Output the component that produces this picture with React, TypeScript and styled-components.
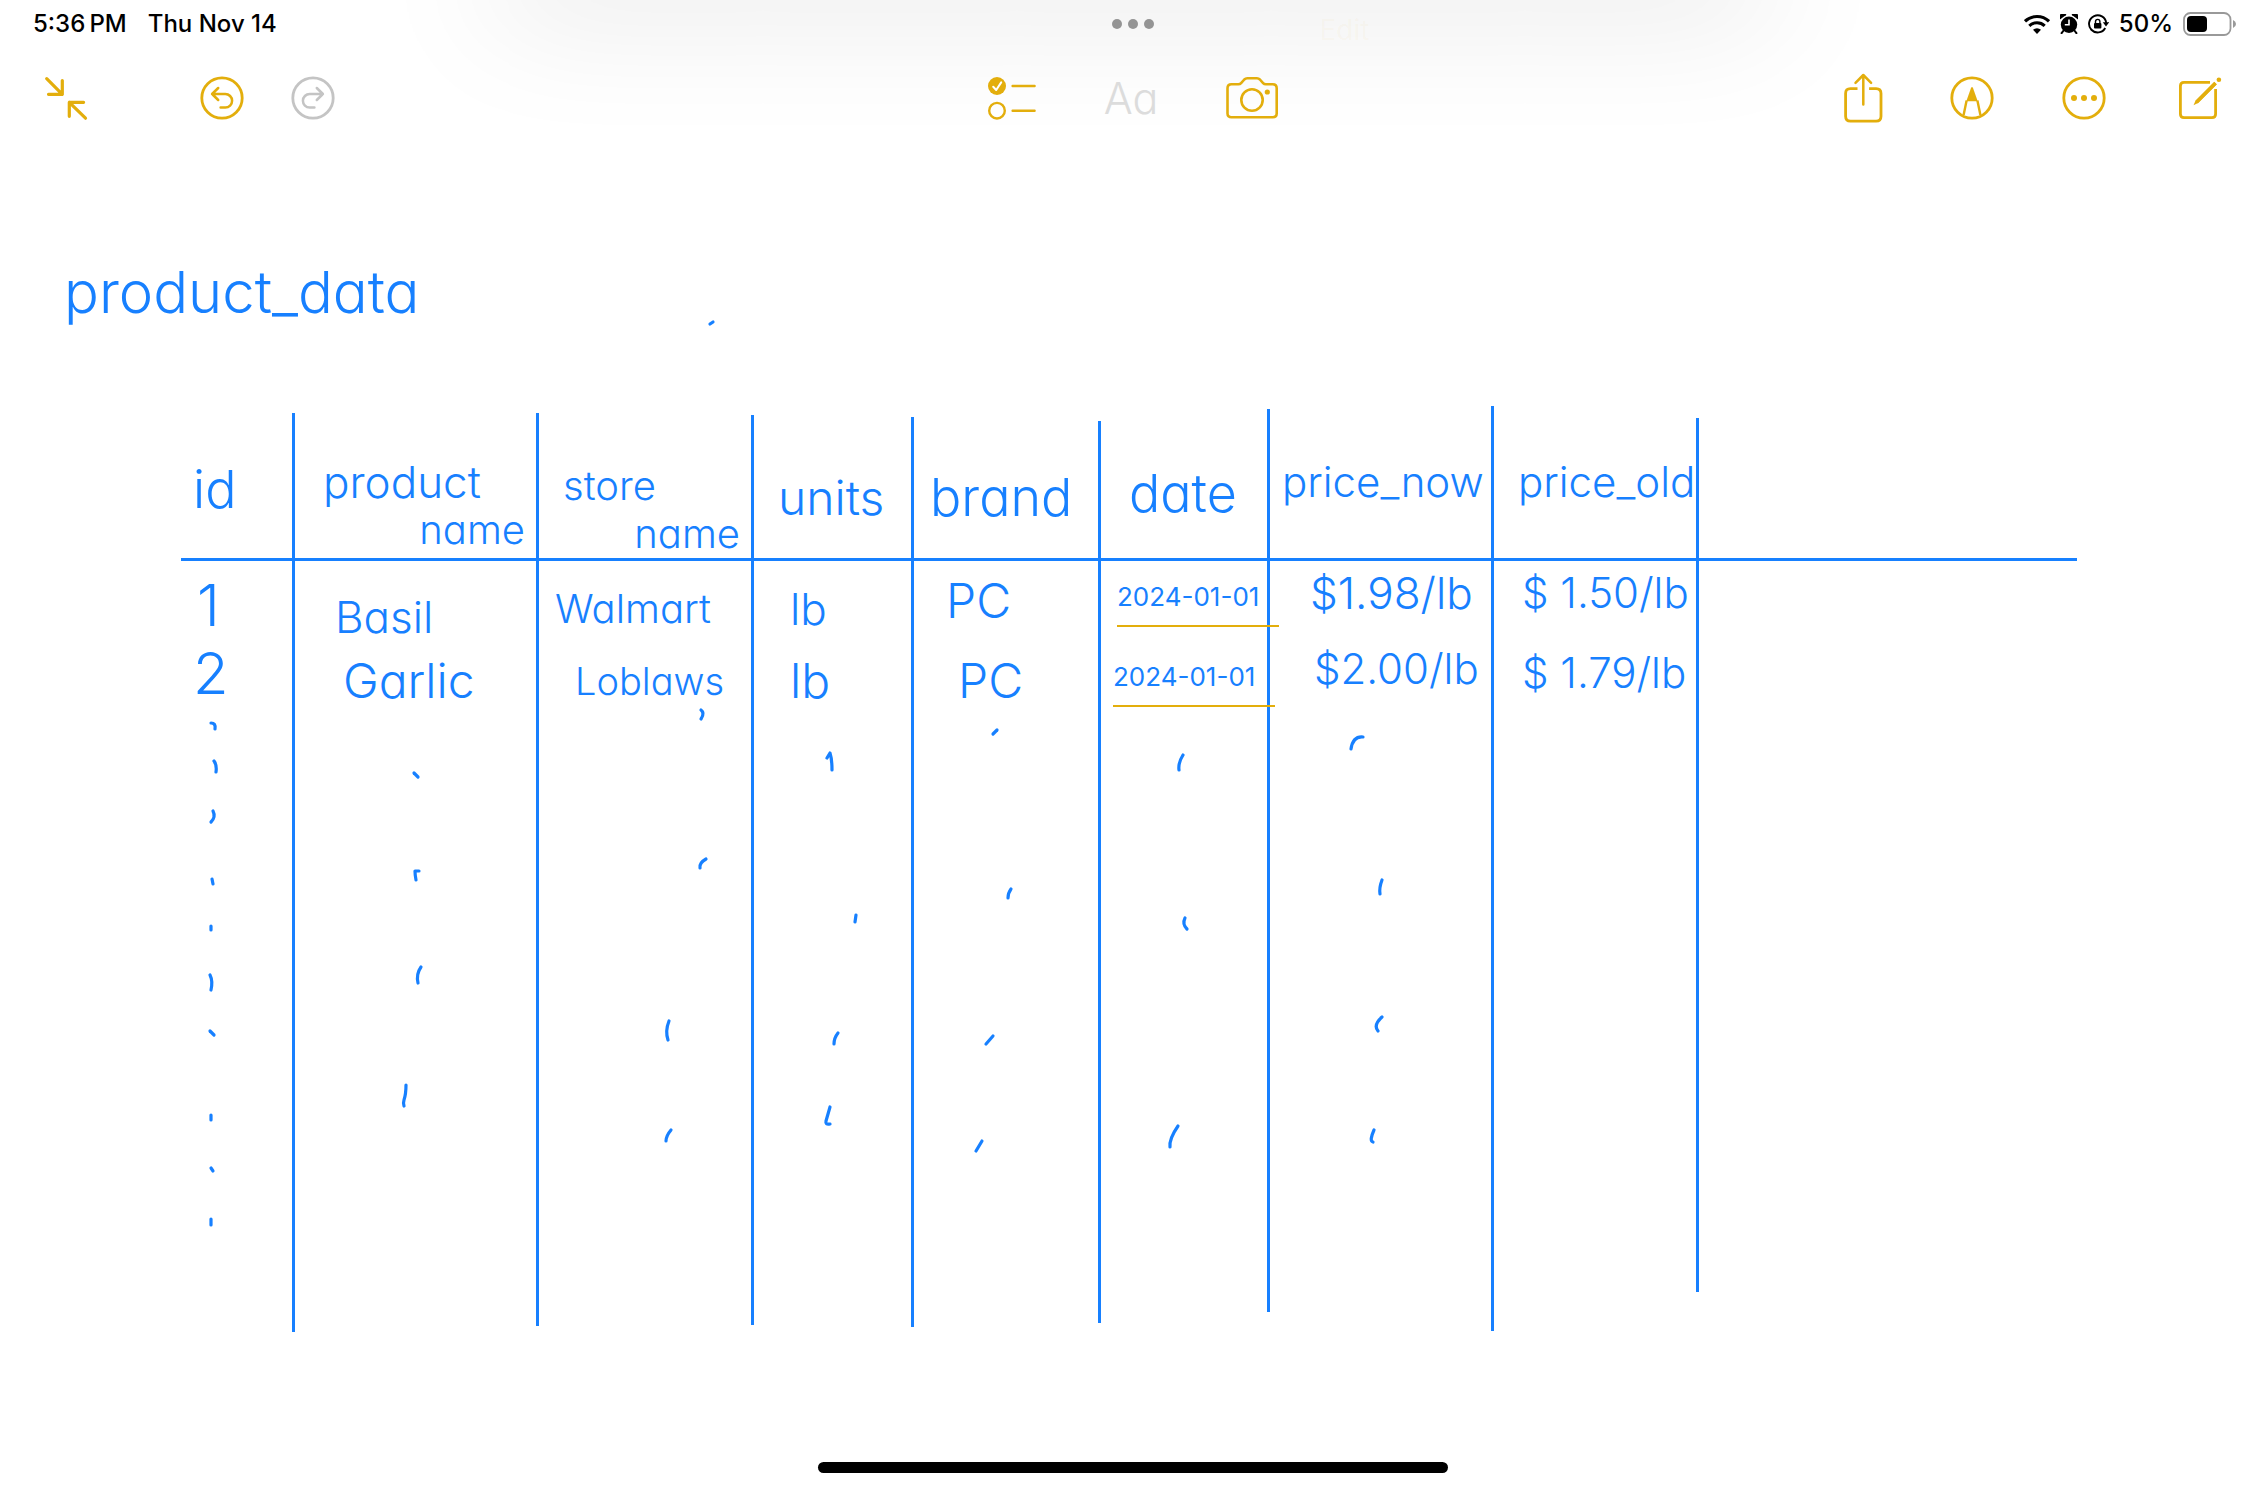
import React from "react";
import styled, { createGlobalStyle } from "styled-components";

const INK = "#1780ff";
const GOLD = "#e3ae0c";

const GlobalStyle = createGlobalStyle`
  *, *::before, *::after { box-sizing: border-box; }
  body {
    margin: 0;
    background: #fff;
    color: #000;
    font-family: Inter, Roboto, "Liberation Sans", sans-serif;
  }
`;

const Page = styled.div`
  position: relative;
  display: flex;
  flex-direction: column;
  min-height: 100vh;
  overflow: hidden;
`;

/* Soft shade behind the multitasking dots */
const TopShade = styled.div`
  position: absolute;
  top: -40px;
  left: 22%;
  right: 22%;
  height: 40px;
  box-shadow: 0 0 130px 4px rgba(0, 0, 0, 0.15);
`;

const ScrolledHeading = styled.div`
  position: absolute;
  top: 6px;
  left: 0;
  right: 0;
  display: flex;
  flex-direction: column;
  align-items: center;
  font-size: 28px;
  line-height: 49px;
  color: rgba(0, 0, 0, 0.02);
  font-feature-settings: "cv11";
`;

const ScrolledLine = styled.div`
  display: flex;
  gap: 24px;
`;

const ScrolledEdit = styled.span`
  color: rgba(227, 174, 12, 0.05);
`;

const StatusBar = styled.header`
  position: relative;
  display: grid;
  grid-template-columns: 1fr auto 1fr;
  align-items: center;
  height: 48px;
  padding: 0 29px;
  font-size: 24px;
  font-weight: 500;
  line-height: 48px;
`;

const StatusGroup = styled.div<{ $end?: boolean }>`
  display: flex;
  align-items: center;
  gap: ${(p) => (p.$end ? "10px" : "21px")};
  padding-left: 4px;
  justify-content: ${(p) => (p.$end ? "flex-end" : "flex-start")};
`;

const MultitaskButton = styled.button`
  display: flex;
  gap: 6px;
  padding: 0;
  border: 0;
  background: none;
`;

const Dot = styled.span`
  width: 10px;
  height: 10px;
  border-radius: 50%;
  background: #949494;
`;

const Toolbar = styled.nav`
  position: relative;
  display: grid;
  grid-template-columns: 1fr auto 1fr;
  align-items: center;
  height: 100px;
  padding: 0 38px;
`;

const ToolGroup = styled.div<{ $gap: number; $side?: "start" | "end" }>`
  display: flex;
  align-items: center;
  gap: ${(p) => p.$gap}px;
  padding-left: ${(p) => (p.$side === "start" ? 4 : 0)}px;
  justify-content: ${(p) => (p.$side === "end" ? "flex-end" : "flex-start")};
`;

const ToolButton = styled.button<{ $width?: number; $muted?: boolean }>`
  display: flex;
  align-items: center;
  justify-content: center;
  width: ${(p) => p.$width ?? 48}px;
  height: 56px;
  padding: 0;
  border: 0;
  background: none;
  color: ${(p) => (p.$muted ? "#c4c4c4" : GOLD)};

  svg { flex: none; overflow: visible; }
`;

const HistoryButtons = styled.div`
  display: flex;
  gap: 43px;
`;

const FormatButton = styled(ToolButton)`
  color: #dcdcdc;
  font: 300 43px/56px Inter, sans-serif;
  font-feature-settings: "cv11";
`;

const Note = styled.main`
  display: flex;
  flex-direction: column;
  color: ${INK};
  font-weight: 300;
  font-feature-settings: "cv11";
`;

const TitleRow = styled.div`
  display: flex;
  align-items: flex-end;
  gap: 288px;
  margin-top: 110px;
  padding-left: 64px;
`;

const Title = styled.h1`
  margin: 0;
  font-size: 58px;
  font-weight: 300;
  line-height: 68px;
`;

const TableWrap = styled.div`
  margin-top: 80px;
  padding: 0 189px 0 181px;
`;

const DataTable = styled.table`
  width: 100%;
  table-layout: fixed;
  border-collapse: separate;
  border-spacing: 0;
`;

const HeadCell = styled.th<{ $lineStart?: number }>`
  height: 155px;
  padding: 0;
  vertical-align: top;
  text-align: left;
  font-weight: 300;
  border-bottom: 3px solid ${INK};
  background: ${(p) =>
    p.$lineStart === undefined
      ? "none"
      : `linear-gradient(${INK}, ${INK}) right ${p.$lineStart}px / 3px 100% no-repeat`};
`;

const Cell = styled.td<{ $height: number; $lineLength?: number }>`
  height: ${(p) => p.$height}px;
  padding: 0;
  vertical-align: top;
  background: ${(p) =>
    p.$lineLength === undefined
      ? "none"
      : `linear-gradient(${INK}, ${INK}) right top / 3px ${p.$lineLength}px no-repeat`};
`;

const Written = styled.div<{ $size: number; $indent: number; $drop: number }>`
  padding: ${(p) => p.$drop}px 0 0 ${(p) => p.$indent}px;
  font-size: ${(p) => p.$size}px;
  line-height: 48px;
  white-space: nowrap;
`;

const SecondLine = styled.div`
  padding-right: 14px;
  font-size: 40px;
  line-height: 48px;
  text-align: right;
`;

const DateLink = styled.a`
  display: block;
  width: 162px;
  padding-bottom: 4px;
  border-bottom: 2px solid ${GOLD};
  color: inherit;
  font-weight: 400;
  text-decoration: none;
`;

const Marks = styled.svg`
  display: block;
  width: 100%;
  height: 100%;
  overflow: visible;
  fill: none;
  stroke: ${INK};
  stroke-width: 3.2;
  stroke-linecap: round;
  stroke-linejoin: round;
`;

const StrayDot = styled(Marks)`
  width: 8px;
  height: 8px;
`;

const HomeArea = styled.footer`
  display: flex;
  justify-content: center;
  margin-top: auto;
  padding-bottom: 15px;
`;

const HomeBar = styled.div`
  width: 630px;
  height: 11px;
  border-radius: 6px;
  background: #000;
`;

type Entry = { text: string; size: number; indent: number; drop: number; link?: boolean };

type Column = {
  width: number;
  lineStart: number;
  lineEnd: number;
  head: Entry;
  second?: string;
  rows: [Entry, Entry];
  marks: string[];
};

const entry = (text: string, size: number, indent: number, drop: number, link?: boolean): Entry => ({
  text, size, indent, drop, link,
});

const columns: Column[] = [
  {
    width: 114, lineStart: 7, lineEnd: 621,
    head: entry("id", 52, 12, 60),
    rows: [entry("1", 58, 16, 20), entry("2", 58, 12, 8)],
    marks: ["M30 12q5 0 4 6", "M33 50q3 4 2 11", "M32 100q3 6-2 11", "M31 168l1 5", "M30 215v4", "M29 264q3 6 1 15", "M29 320l4 4", "M30 404v5", "M30 457l2 3", "M30 508v6"],
  },
  {
    width: 244, lineStart: 7, lineEnd: 615,
    head: entry("product", 44, 28, 52), second: "name",
    rows: [entry("Basil", 44, 40, 32), entry("Garlic", 48, 48, 16)],
    marks: ["M119 62l4 4", "M124 160h-4q0 4 1 9", "M126 256q-5 7-3 16", "M111 374q0 9-2 15q-1 3 0 6"],
  },
  {
    width: 215, lineStart: 9, lineEnd: 614,
    head: entry("store", 40, 24, 56), second: "name",
    rows: [entry("Walmart", 40, 16, 24), entry("Loblaws", 38, 36, 16)],
    marks: ["M162-1q4 3 0 9", "M167 148q-7 4-6 9", "M130 310q-4 10-1 19", "M132 419q-5 6-5 11"],
  },
  {
    width: 160, lineStart: 11, lineEnd: 616,
    head: entry("units", 48, 24, 68),
    rows: [entry("lb", 44, 36, 24), entry("lb", 48, 36, 16)],
    marks: ["M73 47l3-5q2 6 2 17", "M102 204l-1 7", "M84 322q-4 5-4 11", "M76 396l-4 14q-1 4 4 3"],
  },
  {
    width: 187, lineStart: 15, lineEnd: 612,
    head: entry("brand", 52, 16, 68),
    rows: [entry("PC", 48, 32, 16), entry("PC", 48, 44, 16)],
    marks: ["M83 19l-4 4", "M97 178q-3 4-3 9", "M79 325l-7 8", "M68 430l-6 10"],
  },
  {
    width: 169, lineStart: 3, lineEnd: 601,
    head: entry("date", 52, 28, 64),
    rows: [entry("2024-01-01", 26, 16, 12, true), entry("2024-01-01", 26, 12, 12, true)],
    marks: ["M82 44q-5 8-4 15", "M84 207q-3 6 2 11", "M77 415q-9 13-8 21"],
  },
  {
    width: 224, lineStart: 0, lineEnd: 620,
    head: entry("price_now", 42, 12, 52),
    rows: [entry("$1.98/lb", 44, 40, 8), entry("$2.00/lb", 42, 44, 4)],
    marks: ["M93 26q-10-1-12 12", "M112 169q-3 8-2 14", "M112 306q-9 8-4 14", "M104 419q-5 11-1 12"],
  },
  {
    width: 205, lineStart: 12, lineEnd: 581,
    head: entry("price_old", 42, 24, 52),
    rows: [entry("$ 1.50/lb", 42, 28, 8), entry("$ 1.79/lb", 42, 28, 8)],
    marks: [],
  },
];

const ROW_HEIGHTS = [80, 70];

function WrittenText({ item }: { item: Entry }) {
  return (
    <Written $size={item.size} $indent={item.indent} $drop={item.drop}>
      {item.link ? <DateLink href="#date">{item.text}</DateLink> : item.text}
    </Written>
  );
}

function ProductTable() {
  return (
    <TableWrap>
      <DataTable aria-label="product_data">
        <colgroup>
          {columns.map((c) => (
            <col key={c.head.text} style={{ width: c.width }} />
          ))}
          <col />
        </colgroup>
        <thead>
          <tr>
            {columns.map((c) => (
              <HeadCell key={c.head.text} $lineStart={c.lineStart}>
                <WrittenText item={c.head} />
                {c.second && <SecondLine>{c.second}</SecondLine>}
              </HeadCell>
            ))}
            <HeadCell />
          </tr>
        </thead>
        <tbody>
          {ROW_HEIGHTS.map((height, r) => (
            <tr key={r}>
              {columns.map((c) => (
                <Cell key={c.head.text} $height={height} $lineLength={height}>
                  <WrittenText item={c.rows[r]} />
                </Cell>
              ))}
              <Cell $height={height} />
            </tr>
          ))}
          <tr>
            {columns.map((c) => (
              <Cell key={c.head.text} $height={621} $lineLength={c.lineEnd}>
                <Marks aria-hidden="true">
                  {c.marks.map((d) => (
                    <path key={d} d={d} />
                  ))}
                </Marks>
              </Cell>
            ))}
            <Cell $height={621} />
          </tr>
        </tbody>
      </DataTable>
    </TableWrap>
  );
}

const line = {
  fill: "none",
  stroke: "currentColor",
  strokeWidth: 2.8,
  strokeLinecap: "round" as const,
  strokeLinejoin: "round" as const,
};

const CollapseIcon = () => (
  <svg width="48" height="48" viewBox="0 0 48 48" {...line} strokeWidth={3.2}>
    <path d="M4.7 4.7 20.3 20.3M20.3 6.5v13.8H6.5M43.5 44.2 27.3 28.3M27.3 42.3v-14h14.3" />
  </svg>
);

const UndoIcon = () => (
  <svg width="48" height="48" viewBox="0 0 48 48" {...line}>
    <circle cx="24" cy="24" r="20.2" />
    <path d="m20.2 14-6.1 6 6.1 6M14.1 20h13.2a6.8 6.8 0 0 1 0 13.6H22.6" strokeWidth="2.5" />
  </svg>
);

const RedoIcon = () => (
  <svg width="48" height="48" viewBox="0 0 48 48" {...line}>
    <circle cx="24" cy="24" r="20.2" />
    <path d="m27.8 14 6.1 6-6.1 6M33.9 20H20.7a6.8 6.8 0 0 0 0 13.6h4.7" strokeWidth="2.5" />
  </svg>
);

const ChecklistIcon = () => (
  <svg width="48" height="48" viewBox="0 0 48 48" {...line} strokeWidth={2.4}>
    <circle cx="9" cy="12" r="9" fill="currentColor" stroke="none" />
    <path d="m5.2 12.8 3 3.2 5-7.6" stroke="#fff" strokeWidth="2" />
    <circle cx="9" cy="36.7" r="7.8" />
    <path d="M24.6 12h22M24.6 36.7h22" />
  </svg>
);

const CameraIcon = () => (
  <svg width="52" height="44" viewBox="0 0 52 44" {...line} strokeWidth={2.6}>
    <path d="M5.5 8.3h6.8q1.7 0 2.8-1.2l3.2-3.6q1.2-1.2 3-1.2h9.6q1.8 0 3 1.2l3.2 3.6q1.1 1.2 2.8 1.2h6.8q4 0 4 4v25.2q0 3.7-4 3.7H5.5q-4 0-4-3.7V12.3q0-4 4-4z" />
    <circle cx="26" cy="24" r="10.7" />
    <circle cx="41.3" cy="16" r="2.6" fill="currentColor" stroke="none" />
  </svg>
);

const ShareIcon = () => (
  <svg width="40" height="50" viewBox="0 0 40 50" {...line}>
    <path d="M13.5 15.6H6.5q-4.9 0-4.9 4.9v22.7q0 4.900 4.900 4.900h25.600q4.900 0 4.900-4.900V20.500q0-4.900-4.900-4.900h-7" strokeLinecap="butt" />
    <path d="M19.300 31.500V2.500M11.500 9.800l7.800-7.800 7.800 7.800" strokeWidth="2.5" />
  </svg>
);

const MarkupIcon = () => (
  <svg width="48" height="48" viewBox="0 0 48 48" {...line}>
    <circle cx="24" cy="24" r="20.2" />
    <path d="M18.3 27.2 23 14q1-1.800 2 0l4.700 13.200z" fill="currentColor" stroke="none" />
    <path d="m18.600 26.500-3 14.500M29.400 26.500l3 14.500" strokeWidth="2.4" strokeLinecap="butt" />
  </svg>
);

const MoreIcon = () => (
  <svg width="48" height="48" viewBox="0 0 48 48" {...line}>
    <circle cx="24" cy="24" r="20.2" />
    <g fill="currentColor" stroke="none">
      <circle cx="14" cy="24" r="3" />
      <circle cx="24" cy="24" r="3" />
      <circle cx="34" cy="24" r="3" />
    </g>
  </svg>
);

const ComposeIcon = () => (
  <svg width="44" height="44" viewBox="0 0 44 44" {...line}>
    <path d="M32 6.300H6q-3.600 0-3.600 3.600v28q0 3.700 3.600 3.700h28q3.600 0 3.600-3.700V13" strokeLinecap="butt" />
    <path d="m15.500 29.200 2-4.500L36.400 5.800l2.400 2.400L20 27z" fill="currentColor" stroke="none" />
    <path d="M18.500 26.200 37.400 7.300" strokeWidth="3.600" strokeLinecap="butt" />
    <circle cx="40.900" cy="3.700" r="2.300" fill="currentColor" stroke="none" />
  </svg>
);

const WifiIcon = () => (
  <svg width="26" height="20" viewBox="0 0 26 20" fill="none" stroke="#000" strokeWidth="3.1">
    <path d="M1 7.300a17.300 17.300 0 0 1 24 0M5.300 11.800a11.200 11.200 0 0 1 15.400 0" />
    <path d="m13 20 4-4.300a6 6 0 0 0-8 0z" fill="#000" stroke="none" />
  </svg>
);

const AlarmIcon = () => (
  <svg width="18" height="20" viewBox="0 0 18 20">
    <circle cx="9" cy="10.800" r="8.200" />
    <path d="M.6 5A3.200 3.200 0 0 1 5.800 1.200M17.400 5A3.200 3.200 0 0 0 12.200 1.200" stroke="#000" strokeWidth="1.500" />
    <path d="m3.600 16.500-2 2.700M14.400 16.500l2 2.700" stroke="#000" strokeWidth="2" strokeLinecap="round" />
    <path d="M9 5.500v5.300H4.800" fill="none" stroke="#fff" strokeWidth="1.600" />
  </svg>
);

const RotationLockIcon = () => (
  <svg width="21" height="20" viewBox="0 0 21 20">
    <path d="M17.200 14A8.600 8.600 0 1 1 18.200 9" fill="none" stroke="#000" strokeWidth="1.900" />
    <path d="M14.800 8.300h6.400l-3.200 4.200z" />
    <rect x="6" y="9" width="7.400" height="5.600" rx="1" />
    <path d="M7.500 9.500V7.600a2.200 2.200 0 0 1 4.400 0v1.900" fill="none" stroke="#000" strokeWidth="1.400" />
  </svg>
);

const BatteryIcon = () => (
  <svg width="54" height="24" viewBox="0 0 54 24">
    <rect x="1" y="1" width="46.500" height="22" rx="6.500" fill="none" stroke="#999" strokeWidth="1.800" />
    <rect x="4" y="4" width="20" height="16" rx="4" />
    <path d="M50 8q3 1.300 3 4t-3 4z" fill="#999" />
  </svg>
);

export default function App() {
  return (
    <Page>
      <GlobalStyle />
      <TopShade />
      <ScrolledHeading>
        <ScrolledLine>
          <span>Suggested Title: product-data</span>
          <ScrolledEdit>Edit</ScrolledEdit>
        </ScrolledLine>
        <ScrolledLine>November 14, 2024 at 5:34 PM</ScrolledLine>
      </ScrolledHeading>

      <StatusBar>
        <StatusGroup>
          <span>5:36{"\u2009"}PM</span>
          <span>Thu Nov 14</span>
        </StatusGroup>
        <MultitaskButton aria-label="Multitasking">
          <Dot />
          <Dot />
          <Dot />
        </MultitaskButton>
        <StatusGroup $end>
          <WifiIcon />
          <AlarmIcon />
          <RotationLockIcon />
          <span>50%</span>
          <BatteryIcon />
        </StatusGroup>
      </StatusBar>

      <Toolbar aria-label="Note tools">
        <ToolGroup $gap={108} $side="start">
          <ToolButton aria-label="Collapse"><CollapseIcon /></ToolButton>
          <HistoryButtons>
            <ToolButton aria-label="Undo"><UndoIcon /></ToolButton>
            <ToolButton aria-label="Redo" $muted><RedoIcon /></ToolButton>
          </HistoryButtons>
        </ToolGroup>
        <ToolGroup $gap={69}>
          <ToolButton aria-label="Checklist"><ChecklistIcon /></ToolButton>
          <FormatButton $width={52}>Aa</FormatButton>
          <ToolButton aria-label="Camera" $width={52}><CameraIcon /></ToolButton>
        </ToolGroup>
        <ToolGroup $gap={64} $side="end">
          <ToolButton aria-label="Share" $width={40}><ShareIcon /></ToolButton>
          <ToolButton aria-label="Markup"><MarkupIcon /></ToolButton>
          <ToolButton aria-label="More"><MoreIcon /></ToolButton>
          <ToolButton aria-label="New note" $width={56}><ComposeIcon /></ToolButton>
        </ToolGroup>
      </Toolbar>

      <Note>
        <TitleRow>
          <Title>product_data</Title>
          <StrayDot aria-hidden="true"><path d="M2 6l3-2" /></StrayDot>
        </TitleRow>
        <ProductTable />
      </Note>

      <HomeArea>
        <HomeBar />
      </HomeArea>
    </Page>
  );
}
